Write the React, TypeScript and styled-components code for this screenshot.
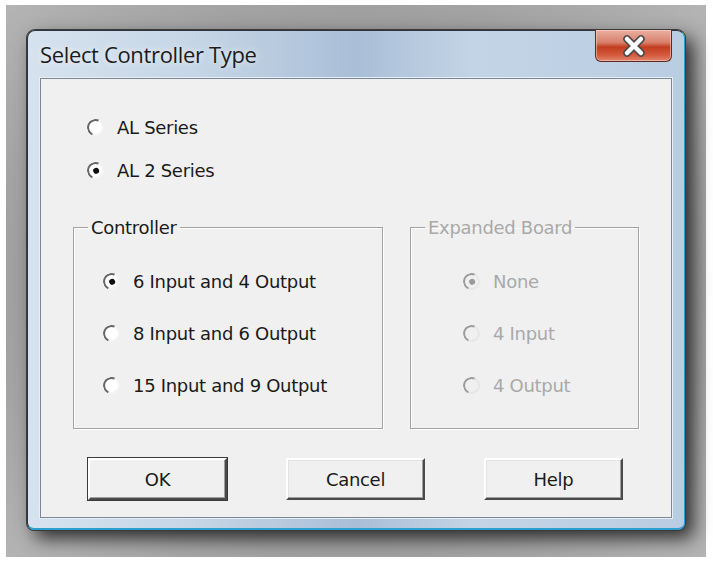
import React from 'react';
import styled, { createGlobalStyle } from 'styled-components';

const GlobalStyle = createGlobalStyle`
  html, body { margin: 0; padding: 0; background: #fff; }
  body { font-family: "DejaVu Sans", Verdana, sans-serif; }
`;

const Backdrop = styled.div`
  margin: 5px 0 0 6px;
  width: 700px;
  height: 552px;
  box-sizing: border-box;
  padding: 25px 0 0 21px;
  background: radial-gradient(ellipse at 50% 50%, #6e6e6e 0%, #9a9a9a 60%, #b4b4b4 100%);
`;

const Window = styled.div`
  width: 658px;
  height: 500px;
  box-sizing: border-box;
  border-radius: 8px 8px 7px 7px;
  border: 1px solid #2e3440;
  border-right-color: #2a9fd0;
  border-bottom: 2px solid #2a9fd0;
  background: linear-gradient(90deg, #d6e2ee 0%, #c6d6e6 25%, #a9bfd7 50%, #c3d4e6 68%, #b9cde2 100%);
  box-shadow: 0 0 0 1px #3b3b3b, 8px 8px 18px rgba(0, 0, 0, 0.75);
  display: flex;
  flex-direction: column;
`;

const TitleBar = styled.div`
  height: 47px;
  display: flex;
  align-items: flex-start;
  padding-left: 12px;
  flex-shrink: 0;
`;

const Title = styled.div`
  margin-top: 8px;
  font-family: "Open Sans", "Noto Sans", sans-serif;
  font-size: 22px;
  color: #1c1c1c;
  letter-spacing: -0.35px;
  text-shadow: 0 0 6px rgba(255, 255, 255, 0.9);
`;

const CloseButton = styled.div`
  margin-left: auto;
  margin-right: 12px;
  margin-top: -1px;
  width: 77px;
  height: 32px;
  box-sizing: border-box;
  border: 1px solid #5e2a22;
  border-top: none;
  border-radius: 0 0 6px 6px;
  background: linear-gradient(180deg, #eab0a2 0%, #d9806b 40%, #c23d1f 55%, #d4583b 80%, #e0866e 100%);
  box-shadow: inset 0 0 0 1px rgba(255, 220, 210, 0.5);
  display: flex;
  align-items: center;
  justify-content: center;
`;

const Client = styled.div`
  margin: 0 12px 10px 12px;
  flex: 1;
  box-sizing: border-box;
  border: 1px solid #7d8896;
  box-shadow: 0 0 0 1px #e7eef6;
  background: #f0f0f0;
  padding: 38px 0 0 46px;
  font-size: 18px;
  color: #1a1a1a;
`;

const TopOptions = styled.div`
  display: flex;
  flex-direction: column;
  gap: 23px;
`;

const OptionList = styled.div<{ $indent: number }>`
  display: flex;
  flex-direction: column;
  gap: 32px;
  padding: 33px 0 0 ${p => p.$indent}px;
`;

const Option = styled.label<{ $disabled?: boolean }>`
  display: flex;
  align-items: center;
  gap: 13px;
  height: 20px;
  color: ${p => (p.$disabled ? '#a9a9a9' : '#1a1a1a')};
  letter-spacing: -0.3px;
`;

const Radio = styled.span<{ $checked?: boolean; $disabled?: boolean }>`
  position: relative;
  width: 17px;
  height: 17px;
  box-sizing: border-box;
  border-radius: 50%;
  border: 2px solid;
  border-color: ${p => (p.$disabled ? '#9c9c9c #e6e6e6 #e6e6e6 #9c9c9c' : '#666 #f4f4f4 #f4f4f4 #666')};
  transform: rotate(-20deg);
  background: ${p => (p.$disabled ? '#f0f0f0' : '#fff')};
  flex-shrink: 0;
  &::after {
    content: '';
    display: ${p => (p.$checked ? 'block' : 'none')};
    position: absolute;
    left: 3.5px;
    top: 3.5px;
    width: 6px;
    height: 6px;
    border-radius: 50%;
    background: ${p => (p.$disabled ? '#9a9a9a' : '#111')};
  }
`;

const Groups = styled.div`
  display: flex;
  gap: 27px;
  margin: 37px 0 0 -14px;
`;

const Group = styled.fieldset<{ $width: number; $disabled?: boolean }>`
  width: ${p => p.$width}px;
  height: 212px;
  box-sizing: border-box;
  margin: 0;
  padding: 0 12px;
  border: 1px solid #a3a3a3;
  box-shadow: inset 1px 1px 0 #fff, 1px 1px 0 #fff;
  legend {
    margin-left: 2px;
    padding: 0 3px;
    font-size: 18px;
    letter-spacing: -0.3px;
    color: ${p => (p.$disabled ? '#a9a9a9' : '#1a1a1a')};
  }
`;

const Buttons = styled.div`
  display: flex;
  gap: 59px;
  margin: 29px 0 0 1px;
`;

const Button = styled.button<{ $default?: boolean }>`
  width: 139px;
  height: 42px;
  box-sizing: border-box;
  background: #f0f0f0;
  font-family: "DejaVu Sans", Verdana, sans-serif;
  font-size: 18px;
  color: #1a1a1a;
  letter-spacing: -0.3px;
  padding: 0;
  border: 2px solid;
  border-color: #ffffff #4a4a4a #4a4a4a #ffffff;
  box-shadow: ${p =>
    p.$default
      ? '0 0 0 1px #3a3a3a, inset -1px -1px 0 #a0a0a0'
      : 'inset -1px -1px 0 #a0a0a0, inset 1px 1px 0 #e3e3e3'};
`;

const CloseIcon = () => (
  <svg width="30" height="22" viewBox="0 0 30 22">
    <path d="M8 4 L22 18 M22 4 L8 18" stroke="#4a4a4a" strokeWidth="7.5" strokeLinecap="round" />
    <path d="M8 4 L22 18 M22 4 L8 18" stroke="#ffffff" strokeWidth="4.5" strokeLinecap="round" />
  </svg>
);

export default function App() {
  return (
    <>
      <GlobalStyle />
      <Backdrop>
        <Window>
          <TitleBar>
            <Title>Select Controller Type</Title>
            <CloseButton>
              <CloseIcon />
            </CloseButton>
          </TitleBar>
          <Client>
            <TopOptions>
              <Option>
                <Radio />
                AL Series
              </Option>
              <Option>
                <Radio $checked />
                AL 2 Series
              </Option>
            </TopOptions>
            <Groups>
              <Group $width={310}>
                <legend>Controller</legend>
                <OptionList $indent={17}>
                  <Option>
                    <Radio $checked />6 Input and 4 Output
                  </Option>
                  <Option>
                    <Radio />8 Input and 6 Output
                  </Option>
                  <Option>
                    <Radio />15 Input and 9 Output
                  </Option>
                </OptionList>
              </Group>
              <Group $width={229} $disabled>
                <legend>Expanded Board</legend>
                <OptionList $indent={40}>
                  <Option $disabled>
                    <Radio $checked $disabled />None
                  </Option>
                  <Option $disabled>
                    <Radio $disabled />4 Input
                  </Option>
                  <Option $disabled>
                    <Radio $disabled />4 Output
                  </Option>
                </OptionList>
              </Group>
            </Groups>
            <Buttons>
              <Button $default>OK</Button>
              <Button>Cancel</Button>
              <Button>Help</Button>
            </Buttons>
          </Client>
        </Window>
      </Backdrop>
    </>
  );
}
